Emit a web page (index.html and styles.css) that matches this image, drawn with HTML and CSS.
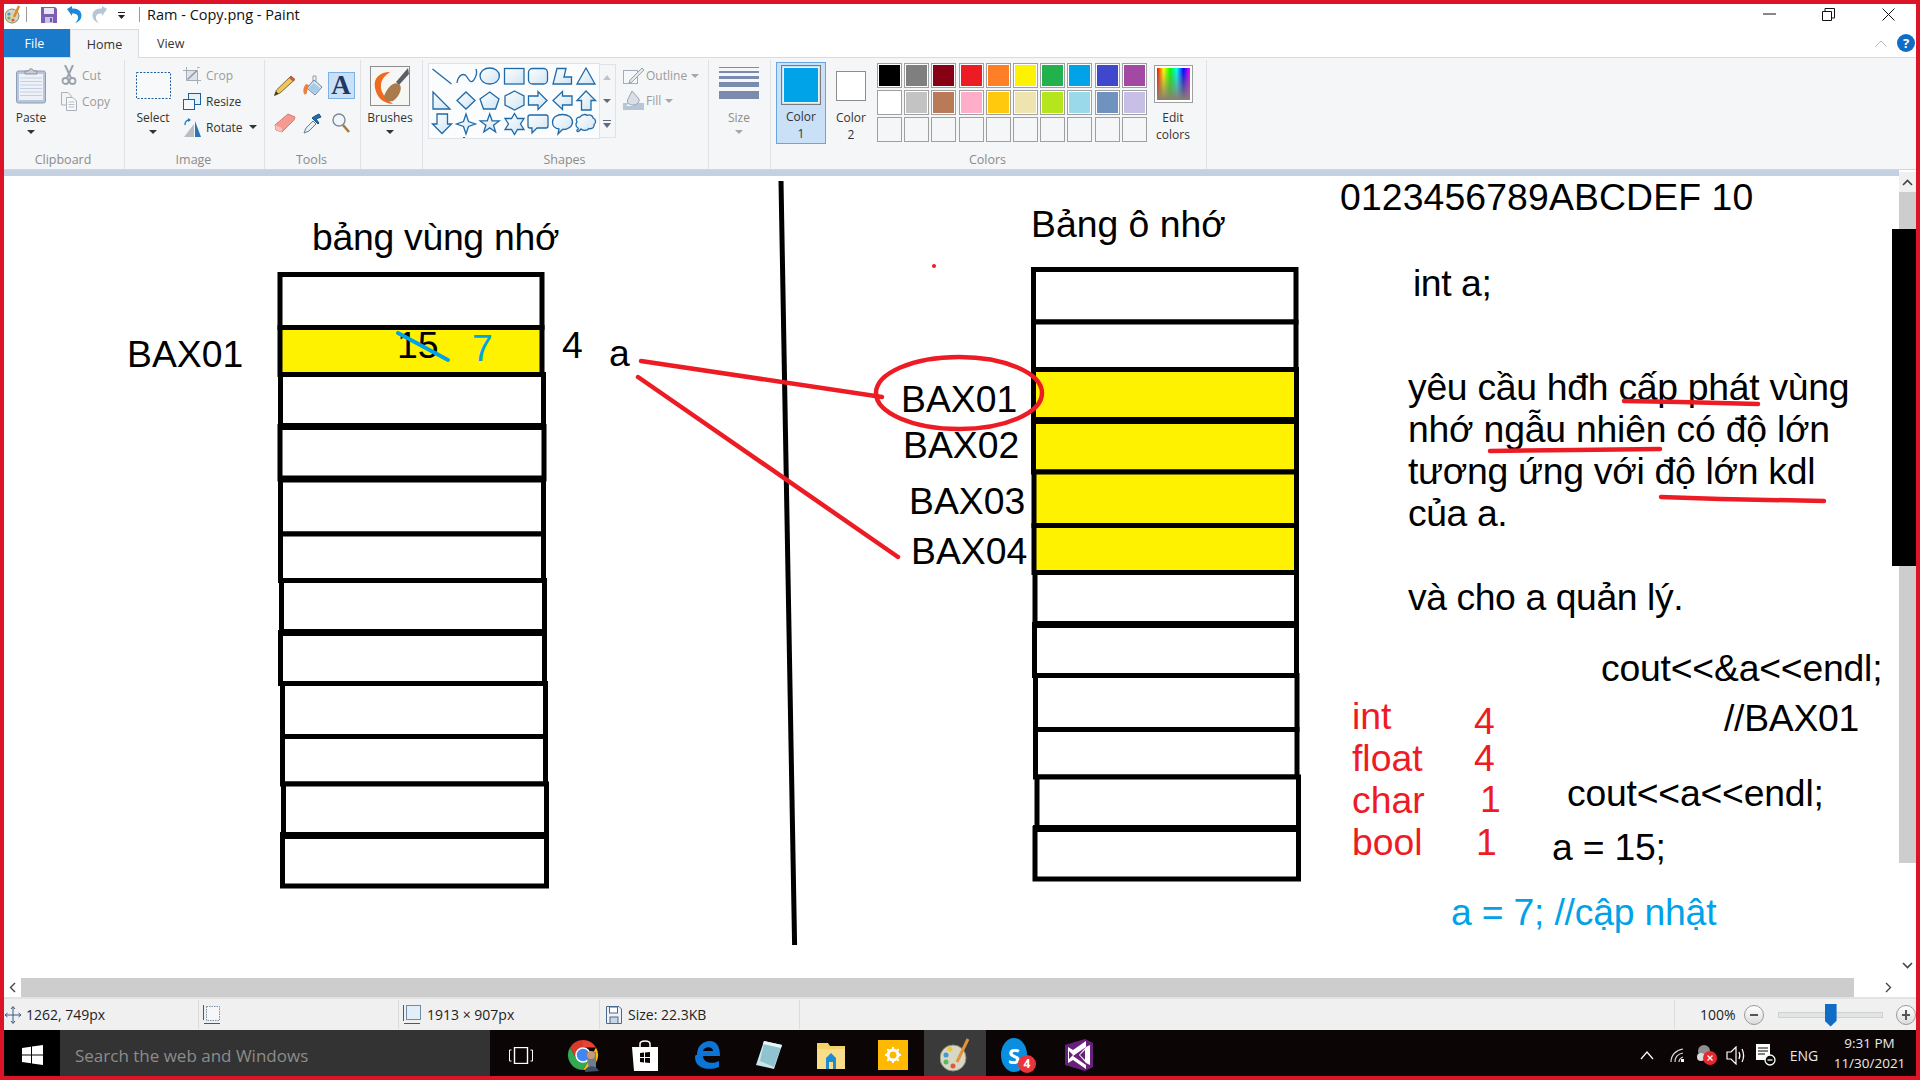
FILE: index.html
```html
<!DOCTYPE html>
<html lang="vi">
<head>
<meta charset="utf-8">
<title>Ram - Copy.png - Paint</title>
<link rel="stylesheet" href="styles.css">
</head>
<body>
<div class="frame">

  <header class="titlebar">
    <svg class="qat-paint" width="16" height="20" viewBox="0 0 16 20"><ellipse cx="7" cy="11" rx="7" ry="7" fill="#d9d3b8" stroke="#8a8a70"/><circle cx="4" cy="9" r="1.6" fill="#3f9ad6"/><circle cx="4" cy="13" r="1.6" fill="#5cb85c"/><circle cx="8" cy="15" r="1.6" fill="#e05a3a"/><path d="M14 1 9 12" stroke="#d98a2b" stroke-width="2.4"/></svg>
    <i class="qat-sep"></i>
    <svg class="qat-save" width="16" height="16" viewBox="0 0 16 16"><path d="M0 0H14L16 2V16H0Z" fill="#7a5fb5"/><rect x="3" y="1" width="10" height="6" fill="#e9e6f4"/><rect x="4" y="10" width="8" height="6" fill="#c9c4de"/><rect x="9" y="11" width="2" height="4" fill="#6a5aa0"/></svg>
    <svg class="qat-undo" width="16" height="17" viewBox="0 0 16 17"><path d="M1 3 6 0V2.5C12 2 15.5 5 15.5 9.5 15.5 13 13 16 9 17 11.5 15 12.5 12.5 12 10.5 11.5 8 9 7 6 7.5V10Z" fill="#1c8ad8"/></svg>
    <svg class="qat-redo" width="16" height="17" viewBox="0 0 16 17"><path d="M15 3 10 0V2.5C4 2 .5 5 .5 9.5.5 13 3 16 7 17 4.5 15 3.5 12.5 4 10.5 4.5 8 7 7 10 7.5V10Z" fill="#b4c6d8"/></svg>
    <svg class="qat-drop" width="8" height="8" viewBox="0 0 8 8"><rect y="0" width="7" height="1" fill="#222"/><path d="M0 3H7L3.500 7Z" fill="#222"/></svg>
    <i class="qat-sep second"></i>
    <span class="title-text">Ram - Copy.png - Paint</span>
    <div class="winctl">
      <svg width="13" height="13" viewBox="0 0 13 13" class="w-min"><path d="M0 6H13" stroke="#111" stroke-width="1"/></svg>
      <svg width="13" height="13" viewBox="0 0 13 13" class="w-max"><path d="M.5 3.500H9.500V12.500H.5ZM3 3.500V.5H12.500V10H9.500" fill="none" stroke="#111"/></svg>
      <svg width="13" height="13" viewBox="0 0 13 13" class="w-close"><path d="M.5.5 12.500 12.500M12.500.5.5 12.500" stroke="#111"/></svg>
    </div>
  </header>

  <nav class="tabs">
    <span class="tab file">File</span>
    <span class="tab home">Home</span>
    <span class="tab view">View</span>
    <svg class="collapse" width="12" height="7" viewBox="0 0 12 7"><path d="M.5 6.500 6 1l5.500 5.500" fill="none" stroke="#b5b5b5"/></svg>
    <span class="help">?</span>
  </nav>

  <section class="ribbon">
    <div class="group g-clip">
      <div class="group-body">
        <div class="big w-paste">
          <div class="big-icon">
            <svg width="30" height="36" viewBox="0 0 30 36"><rect x=".5" y="3" width="29" height="32" rx="2" fill="#b9c6da" stroke="#8d9db8"/><rect x="3" y="6" width="24" height="26" fill="#eef2f8"/><path d="M4 10H26M4 13.500H26M4 17H26M4 20.500H26M4 24H26M4 27.500H26" stroke="#c3d0e4"/><path d="M9 6V3H12.500C13 0 17 0 17.500 3H21V6Z" fill="#c9ccd2" stroke="#8c8f98"/></svg>
          </div>
          <span class="big-label">Paste</span>
          <i class="caret"></i>
        </div>
        <div class="smalls">
          <div class="small off"><svg width="16" height="20" viewBox="0 0 16 20"><path d="M4 0 10 13M12 0 6 13" stroke="#9aa3ad" stroke-width="2" fill="none"/><circle cx="4.500" cy="16" r="3" fill="none" stroke="#9aa3ad" stroke-width="1.800"/><circle cx="11.500" cy="16" r="3" fill="none" stroke="#9aa3ad" stroke-width="1.800"/></svg><span>Cut</span></div>
          <div class="small off"><svg width="16" height="19" viewBox="0 0 16 19"><path d="M.5.5H7L10 3.500V13H.5Z" fill="#f2f4f6" stroke="#a9b0b8"/><path d="M5.500 5.500H12L15.500 9V18.500H5.500Z" fill="#f8f9fa" stroke="#a9b0b8"/><path d="M7.500 10H13.500M7.500 12.500H13.500M7.500 15H13.500" stroke="#b9bfc6"/></svg><span>Copy</span></div>
        </div>
      </div>
      <div class="group-label">Clipboard</div>
    </div>

    <div class="group g-image">
      <div class="group-body">
        <div class="big w-select">
          <div class="big-icon"><svg width="35" height="27" viewBox="0 0 35 27"><rect x=".5" y=".5" width="34" height="26" fill="#f8f9fa" stroke="#1d5f9e" stroke-dasharray="2 1.500"/></svg></div>
          <span class="big-label">Select</span>
          <i class="caret"></i>
        </div>
        <div class="smalls">
          <div class="small off"><svg width="18" height="17" viewBox="0 0 18 17"><path d="M3.500 0V13.500H18M0 3.500H14.500V17" fill="none" stroke="#a3acb7"/><rect x="4" y="4" width="10" height="9" fill="#dfe3e8"/><path d="M4.500 12.500 14 3.500" stroke="#8d97a3" stroke-width="1.500"/><path d="M14 1 17 0" stroke="#a3acb7"/></svg><span>Crop</span></div>
          <div class="small"><svg width="18" height="17" viewBox="0 0 18 17"><rect x="5.500" y=".5" width="12" height="11" fill="#e6f0f9" stroke="#1d5f9e"/><rect x=".5" y="6.500" width="11" height="10" fill="#f6f8fa" stroke="#1d5f9e"/></svg><span>Resize</span></div>
          <div class="small"><svg width="18" height="19" viewBox="0 0 18 19"><path d="M2 7C2 3 4 2 7 2" fill="none" stroke="#1d7cc9" stroke-width="1.400"/><path d="M5 0 8 2 5 4Z" fill="#1d7cc9"/><path d="M11 6V19H1Z" fill="#b9bcc0"/><path d="M12 3 18 19H12Z" fill="#2a74b8"/></svg><span>Rotate</span><i class="caret inline"></i></div>
        </div>
      </div>
      <div class="group-label">Image</div>
    </div>

    <div class="group g-tools">
      <div class="group-body">
        <div class="tool-grid">
          <div class="tool"><svg width="22" height="21" viewBox="0 0 22 21"><path d="M17 1 21 4.500 6 18 .5 20.500 2.500 15Z" fill="#f0c65a" stroke="#7d6a34"/><path d="M17 1 21 4.500 19 6.500 15 3Z" fill="#c75a4a"/><path d="M.5 20.500 2 16.500 4.500 18.500Z" fill="#333"/></svg></div>
          <div class="tool"><svg width="20" height="21" viewBox="0 0 20 21"><path d="M11 5 19 12 12 20 4 13Z" fill="#dbe9f5" stroke="#5d87ad"/><path d="M5 13 11 8 17 13 12 19Z" fill="#a9cbe6"/><path d="M10 7V1H13V7" fill="none" stroke="#9a9a9a"/><path d="M3 9C0 12 0 16 1 19 3 20 4 19 4 16 5 14 5 12 6 10Z" fill="#ef7f3a"/></svg></div>
          <div class="tool tool-on"><span class="letter-a">A</span></div>
          <div class="tool"><svg width="22" height="20" viewBox="0 0 22 20"><path d="M14 1 21 4 20 7 8 19 2 17 1 12Z" fill="#f49a90" stroke="#d77c72"/><path d="M2 17 1 12 8 15 8 19Z" fill="#f7c1ba"/></svg></div>
          <div class="tool"><svg width="20" height="21" viewBox="0 0 20 21"><path d="M1 20 3 15 10 8 13 11 6 18Z" fill="#e9eef3" stroke="#6c7d8c"/><path d="M10 6 15 11 16 10 13 6 18 4 16 1 12 3 9 5Z" fill="#1f6fb2" stroke="#174f80"/></svg></div>
          <div class="tool"><svg width="18" height="20" viewBox="0 0 18 20"><circle cx="7" cy="7" r="6" fill="#eef6fc" stroke="#7d8a96" stroke-width="1.400"/><path d="M11 12 17 19" stroke="#a67c3a" stroke-width="2.600"/></svg></div>
        </div>
      </div>
      <div class="group-label">Tools</div>
    </div>

    <div class="group g-brush">
      <div class="group-body">
        <div class="big w-brush">
          <div class="big-icon"><svg width="40" height="40" viewBox="0 0 40 40"><rect x=".5" y=".5" width="39" height="39" fill="#f6f6f4" stroke="#8d8d8d"/><path d="M38 2 26 16 29 19 39 8Z" fill="#5a5f66"/><path d="M20 6C10 6 3 12 5 22 7 32 13 37 23 38 15 32 10 26 11 18 12 12 16 9 20 6Z" fill="#ee6a1f"/><path d="M14 30C18 20 24 15 29 18 33 21 30 30 23 35 19 36 15 34 14 30Z" fill="#a87a4c"/></svg></div>
          <span class="big-label">Brushes</span>
          <i class="caret"></i>
        </div>
      </div>
      <div class="group-label">&nbsp;</div>
    </div>

    <div class="group g-shapes">
      <div class="group-body">
        <div class="gallery">
          <svg class="gallery-svg" width="170" height="74" viewBox="0 0 170 74">
            <defs><linearGradient id="sf" x1="0" y1="0" x2="1" y2="1"><stop offset="0" stop-color="#fff"/><stop offset="1" stop-color="#cfe4f4"/></linearGradient></defs>
            <g fill="url(#sf)" stroke="#1f6aa8" stroke-width="1.300" stroke-linejoin="miter">
              <path d="M3.500 5 22.500 20" fill="none"/>
              <path d="M28 19C29 11 35 8 38 13S43 20 46 14 47 6 47 5" fill="none"/>
              <ellipse cx="60.700" cy="12" rx="9.700" ry="8"/>
              <rect x="75.500" y="4.500" width="19.500" height="15.500"/>
              <rect x="99.500" y="4.500" width="19" height="15.500" rx="4"/>
              <path d="M128 4.500H137L135 13H142.500V20H124Z"/>
              <path d="M157 4 166 20H148Z"/>
              <path d="M4 28 21 45H4Z"/>
              <path d="M37 28 46 36.500 37 45 28 36.500Z"/>
              <path d="M60.700 28 70 35 66.500 45H54.500L51 35Z"/>
              <path d="M85.500 27 95 32V41L85.500 46 76 41V32Z"/>
              <path d="M99.500 32H109V27.500L118 36.500 109 45.500V41H99.500Z"/>
              <path d="M143 32H133.500V27.500L124 36.500 133.500 45.500V41H143Z"/>
              <path d="M157 27 166.500 36.500H162V46H152.500V36.500H148Z"/>
              <path d="M8 50H18.500V60H22.500L13 69.500 3.500 60H8Z"/>
              <path d="M37 50 39.500 57.500 46.500 60 39.500 62.500 37 70 34.500 62.500 27.500 60 34.500 57.500Z"/>
              <path d="M60.700 50 63.100 56.800 70.200 56.900 64.500 61.200 66.600 68 60.700 63.900 54.800 68 56.900 61.200 51.200 56.900 58.300 56.800Z"/>
              <path d="M85.500 49.500 88.500 54.500H95L91.500 60 95 65.500H88.500L85.500 70.500 82.500 65.500H76L79.500 60 76 54.500H82.500Z"/>
              <path d="M101 51H117A2 2 0 0 1 119 53V62A2 2 0 0 1 117 64H108L103 69V64H101A2 2 0 0 1 99 62V53A2 2 0 0 1 101 51Z"/>
              <path d="M133.500 50.500C139 50.500 143.500 53.500 143.500 58S139 65.500 133.500 65.500L129 70 130 65C126 64.500 123.500 62 123.500 58 123.500 53.500 128 50.500 133.500 50.500Z"/>
              <path d="M151 53C153 50 157 50 158 51.500 161 50 164 52 164 54 167 55 167.500 59 165 60.500 166 63 163 65.500 160 64.500 158 67 154 67 152 65 150 67.500 147.500 69 148 66 150 65 149 64 149 64 146.500 63 146.500 59 148 58 146 55 148.500 53 151 53Z"/>
            </g>
            <rect x="34" y="73" width="2" height="1" fill="#1f6aa8"/>
          </svg>
        </div>
        <div class="spin">
          <span class="spin-cell"><i class="tri up"></i></span>
          <span class="spin-cell"><i class="tri dn"></i></span>
          <span class="spin-cell"><i class="tri more"></i></span>
        </div>
        <div class="smalls s-outline">
          <div class="small off"><svg width="21" height="16" viewBox="0 0 21 16"><rect x=".5" y="2.500" width="14" height="13" fill="#f6f7f8" stroke="#a3acb7"/><path d="M19 0 21 2 9 14 6 15 7 12Z" fill="#e4e7ea" stroke="#9aa3ad"/></svg><span>Outline</span><i class="caret inline gray tight"></i></div>
          <div class="small off"><svg width="21" height="19" viewBox="0 0 21 19"><path d="M0 12H6L3 15 9 15 15 12H21V19H0Z" fill="#b8c5d6"/><path d="M9 0 16 8C17 11 14 14 10 14 6 14 3 11 5 8Z" fill="#d8dfe7" stroke="#9aa3ad"/></svg><span>Fill</span><i class="caret inline gray tight"></i></div>
        </div>
      </div>
      <div class="group-label">Shapes</div>
    </div>

    <div class="group g-size">
      <div class="group-body">
        <div class="big w-size off-text">
          <div class="big-icon"><svg width="40" height="47" viewBox="0 0 40 47"><g fill="#7b8bad"><rect y="5" width="40" height="1"/><rect y="9" width="40" height="2"/><rect y="14" width="40" height="3"/><rect y="20" width="40" height="5"/><rect y="29" width="40" height="8"/></g></svg></div>
          <span class="big-label">Size</span>
          <i class="caret gray"></i>
        </div>
      </div>
      <div class="group-label">&nbsp;</div>
    </div>

    <div class="group g-colors">
      <div class="group-body">
        <div class="color1">
          <span class="sw-big"></span>
          <span class="big-label">Color</span>
          <span class="big-label">1</span>
        </div>
        <div class="color2">
          <div class="big-icon"><span class="sw-mid"></span></div>
          <span class="big-label">Color</span>
          <span class="big-label">2</span>
        </div>
        <div class="palette">
          <i class="sw c01"></i><i class="sw c02"></i><i class="sw c03"></i><i class="sw c04"></i><i class="sw c05"></i><i class="sw c06"></i><i class="sw c07"></i><i class="sw c08"></i><i class="sw c09"></i><i class="sw c10"></i>
          <i class="sw c11"></i><i class="sw c12"></i><i class="sw c13"></i><i class="sw c14"></i><i class="sw c15"></i><i class="sw c16"></i><i class="sw c17"></i><i class="sw c18"></i><i class="sw c19"></i><i class="sw c20"></i>
          <i class="sw"></i><i class="sw"></i><i class="sw"></i><i class="sw"></i><i class="sw"></i><i class="sw"></i><i class="sw"></i><i class="sw"></i><i class="sw"></i><i class="sw"></i>
        </div>
        <div class="edit">
          <div class="big-icon"><span class="rainbow"></span></div>
          <span class="big-label">Edit</span>
          <span class="big-label">colors</span>
        </div>
      </div>
      <div class="group-label">Colors</div>
    </div>
  </section>

  <main class="workspace">
    <div class="paper">
      <svg class="drawing" width="1895" height="802" viewBox="4 176 1895 802">
        <g class="cells">
          <rect x="280" y="274.500" width="262" height="53"/>
          <rect class="y" x="280" y="327.500" width="262" height="47"/>
          <rect x="280.500" y="374.500" width="263" height="52"/>
          <rect x="280" y="426.500" width="264" height="52.500"/>
          <rect x="280.500" y="479" width="263" height="55"/>
          <rect x="280.500" y="534" width="263" height="46.500"/>
          <rect x="281.500" y="580.500" width="263" height="52"/>
          <rect x="280.500" y="632.500" width="264" height="51"/>
          <rect x="282.500" y="683.500" width="263" height="53"/>
          <rect x="282.500" y="736.500" width="263" height="47.500"/>
          <rect x="283.500" y="784" width="263" height="51.500"/>
          <rect x="282.500" y="835.500" width="264" height="50.500"/>

          <rect x="1033.500" y="269.500" width="262.500" height="52.500"/>
          <rect x="1033.500" y="322" width="262.500" height="47.500"/>
          <rect class="y" x="1033.500" y="369.500" width="263" height="51"/>
          <rect class="y" x="1033.500" y="420.500" width="263" height="51.500"/>
          <rect class="y" x="1034" y="472" width="262.500" height="53.500"/>
          <rect class="y" x="1034" y="525.500" width="262.500" height="47"/>
          <rect x="1035" y="572.500" width="261.500" height="52"/>
          <rect x="1034.500" y="624.500" width="262" height="51"/>
          <rect x="1035.500" y="675.500" width="261.500" height="54"/>
          <rect x="1035.500" y="729.500" width="261.500" height="47.500"/>
          <rect x="1037" y="777" width="261.500" height="51.500"/>
          <rect x="1035" y="828.500" width="263.500" height="50.500"/>
        </g>
        <path class="bars" d="M278 426.500H546M278 479H546M279 632.500H547M280 835.500H549M1031 420.500H1299M1033 624.500H1299M1033 828.500H1301"/>
        <path class="divider" d="M781 181 794.600 945"/>

        <g class="t">
          <text class="ls3" x="312" y="250">bảng vùng nhớ</text>
          <text x="1031" y="237">Bảng ô nhớ</text>
          <text class="lsp" x="1340" y="210">0123456789ABCDEF 10</text>
          <text x="127" y="367">BAX01</text>
          <text x="397" y="358">15</text>
          <text x="562" y="358">4</text>
          <text x="609" y="366">a</text>
          <text x="901" y="412">BAX01</text>
          <text x="903" y="458">BAX02</text>
          <text x="909" y="514">BAX03</text>
          <text x="911" y="564">BAX04</text>
          <text class="ls4" x="1413" y="296">int a;</text>
          <text class="ls3" x="1408" y="400">yêu cầu hđh cấp phát vùng</text>
          <text class="ls2" x="1408" y="442">nhớ ngẫu nhiên có độ lớn</text>
          <text class="ls3" x="1408" y="484">tương ứng với độ lớn kdl</text>
          <text class="ls4" x="1408" y="526">của a.</text>
          <text class="ls4" x="1408" y="610">và cho a quản lý.</text>
          <text class="ls2" x="1601" y="681">cout&lt;&lt;&amp;a&lt;&lt;endl;</text>
          <text class="ls3" x="1724" y="731">//BAX01</text>
          <text class="ls2" x="1567" y="806">cout&lt;&lt;a&lt;&lt;endl;</text>
          <text class="ls2" x="1552" y="860">a = 15;</text>
        </g>
        <g class="t red">
          <text x="1352" y="729">int</text>
          <text x="1352" y="771">float</text>
          <text x="1352" y="813">char</text>
          <text x="1352" y="855">bool</text>
          <text x="1474" y="734">4</text>
          <text x="1474" y="771">4</text>
          <text x="1480" y="812">1</text>
          <text x="1476" y="855">1</text>
        </g>
        <g class="t blue">
          <text x="472" y="361">7</text>
          <text class="ls2" x="1451" y="925">a = 7; //cập nhật</text>
        </g>
        <path class="ink-blue" d="M398 333 448 360"/>
        <g class="ink-red">
          <path d="M641 361 882 397"/>
          <path d="M638 377 898 557"/>
          <ellipse cx="959" cy="393" rx="83" ry="36"/>
          <path d="M1624 401 1680 402 1758 404"/>
          <path d="M1490 451 1575 450 1660 449"/>
          <path d="M1661 497 1720 499 1824 501"/>
        </g>
        <circle class="dot" cx="934" cy="266" r="2"/>
      </svg>
    </div>
    <aside class="vscroll">
      <span class="v-arrow top"><svg width="11" height="7" viewBox="0 0 11 7"><path d="M1 6 5.500 1.500 10 6" fill="none" stroke="#444" stroke-width="1.600"/></svg></span>
      <span class="v-track"></span>
      <span class="v-rest"><svg width="11" height="7" viewBox="0 0 11 7"><path d="M1 1 5.500 5.500 10 1" fill="none" stroke="#444" stroke-width="1.600"/></svg></span>
    </aside>
    <div class="black-edge"></div>
  </main>

  <div class="hscroll">
    <span class="h-arrow"><svg width="7" height="11" viewBox="0 0 7 11"><path d="M6 1 1.500 5.500 6 10" fill="none" stroke="#444" stroke-width="1.400"/></svg></span>
    <span class="h-track"></span>
    <span class="h-rest"><svg width="7" height="11" viewBox="0 0 7 11"><path d="M1 1 5.500 5.500 1 10" fill="none" stroke="#444" stroke-width="1.400"/></svg></span>
  </div>

  <footer class="status">
    <div class="st st1"><svg width="16" height="18" viewBox="0 0 16 18"><path d="M8 1V17M0 9H16M6 3 8 .5 10 3M6 15 8 17.500 10 15M2.500 7 0 9 2.500 11M13.500 7 16 9 13.500 11" fill="none" stroke="#3d5a80"/></svg><span>1262, 749px</span></div>
    <div class="st st2"><svg width="18" height="20" viewBox="0 0 18 20"><rect x="3.500" y="1.500" width="13" height="14" fill="#f5f7f9" stroke="#7d8ea6" stroke-dasharray="1.500 1"/><path d="M.5 0V15M1 18.500H17" stroke="#3d5a80"/></svg></div>
    <div class="st st3"><svg width="18" height="20" viewBox="0 0 18 20"><rect x="3.500" y=".5" width="14" height="14" fill="#e3eff8" stroke="#6f8ba8"/><path d="M.5 0V16M1 18.500H17" stroke="#3d5a80"/></svg><span>1913 × 907px</span></div>
    <div class="st st4"><svg width="16" height="18" viewBox="0 0 16 18"><path d="M.5.5H13L15.500 3V17.500H.5Z" fill="#eef2f6" stroke="#4a6a8f"/><rect x="3.500" y="1" width="8" height="6" fill="#fff" stroke="#4a6a8f"/><rect x="4" y="11" width="8" height="6.500" fill="#c9d6e4" stroke="#4a6a8f"/></svg><span>Size: 22.3KB</span></div>
    <div class="st st5"></div>
    <div class="st-zoom">
      <span>100%</span>
      <i class="zoom-btn minus"></i>
      <span class="slider"><i class="slider-thumb"></i></span>
      <i class="zoom-btn plus"></i>
    </div>
  </footer>

  <div class="taskbar">
    <div class="start"><svg width="21" height="20" viewBox="0 0 21 20"><path d="M0 3 9 1.700V9.500H0ZM10 1.500 21 0V9.500H10ZM0 10.500H9V18.300L0 17ZM10 10.500H21V20L10 18.500Z" fill="#fff"/></svg></div>
    <div class="search">Search the web and Windows</div>
    <div class="slot"><svg width="24" height="17" viewBox="0 0 24 17"><rect x="5.500" y=".5" width="13" height="16" fill="none" stroke="#fff" stroke-width="1.400"/><path d="M2.500 3H.5V14H2.500M21.500 3H23.500V14H21.500" fill="none" stroke="#fff"/></svg></div>
    <div class="slot"><svg width="32" height="33" viewBox="0 0 32 33"><path d="M16 1A15 15 0 0 1 29 8.500H16Z" fill="#ea4335"/><path d="M3 8.500A15 15 0 0 1 16 1V8.500H16L9.500 20Z" fill="#d93a2b"/><path d="M29 8.500A15 15 0 0 1 16 31L22.500 20Z" fill="#fbbc05"/><path d="M3 8.500A15 15 0 0 0 16 31L22.500 20H9.500Z" fill="#34a853"/><circle cx="16" cy="16" r="7" fill="#4285f4" stroke="#fff" stroke-width="1.500"/><path d="M19 13H29V31H22Z" fill="#6d7f8f"/><circle cx="24" cy="16" r="4" fill="#c99a7a"/><path d="M18 33C18 26 29 25 32 32Z" fill="#3e5166"/></svg></div>
    <div class="slot"><svg width="26" height="31" viewBox="0 0 26 31"><path d="M8 8V4C8 0 18 0 18 4V8" fill="none" stroke="#fff" stroke-width="1.500"/><path d="M0 7H26V31H2Z" fill="#fff"/><path d="M8 13 12 12.500V17H8ZM13 12.500 18 12V17H13ZM8 18H12V22.500L8 22ZM13 18H18V23L13 22.500Z" fill="#0a0505"/></svg></div>
    <div class="slot"><svg width="25" height="28" viewBox="0 0 25 28"><path d="M2 14C2 5 8 0 15 0 21 0 25 5 25 15H8C8 21 16 24 24 20V26C14 30 0 28 0 16 0 14 1 14 2 14ZM8 10H18C18 5 9 5 8 10Z" fill="#0c75d6"/></svg></div>
    <div class="slot"><svg width="26" height="28" viewBox="0 0 26 28"><path d="M8 0 26 4 18 28 0 24Z" fill="#c9e4ea"/><path d="M4 20 8 3 25 6 18 26Z" fill="#8fc3d0"/><path d="M8 0 26 4 25 7 7 3Z" fill="#e9f4f6"/></svg></div>
    <div class="slot"><svg width="28" height="28" viewBox="0 0 28 28"><path d="M0 2H11L13 5H28V28H0Z" fill="#f4d26a"/><path d="M0 8H28V28H0Z" fill="#f8dd8a"/><path d="M9 17 14 12 19 17V28H9Z" fill="#1e8bd2"/><rect x="12" y="21" width="4" height="7" fill="#f8dd8a"/></svg></div>
    <div class="slot"><span class="settings"><svg width="16" height="16" viewBox="0 0 16 16"><circle cx="8" cy="8" r="5" fill="none" stroke="#fff" stroke-width="3"/><path d="M8 0V3M8 13V16M0 8H3M13 8H16M2.300 2.300 4.400 4.400M11.600 11.600 13.700 13.700M2.300 13.700 4.400 11.600M11.600 4.400 13.700 2.300" stroke="#fff" stroke-width="2"/></svg></span></div>
    <div class="slot active"><svg width="30" height="34" viewBox="0 0 30 34"><ellipse cx="13" cy="20" rx="13" ry="13" fill="#d8d6c4" stroke="#8f8d78"/><circle cx="6" cy="17" r="2.500" fill="#3f9ad6"/><circle cx="6" cy="24" r="2.500" fill="#5cb85c"/><circle cx="13" cy="28" r="2.500" fill="#e05a3a"/><circle cx="10" cy="11" r="2.500" fill="#e8c93a"/><path d="M28 1 17 24" stroke="#e2933a" stroke-width="3"/></svg></div>
    <div class="slot skype-slot"><span class="skype">S</span><span class="badge">4</span></div>
    <div class="slot"><svg width="28" height="32" viewBox="0 0 28 32"><path d="M0 6 20 0 28 4V28L20 32 0 26Z" fill="#68217a"/><path d="M3 8 8 11 21 2V8L8 17 21 26V30L8 21 3 24Z" fill="#fff"/><path d="M21 8 25 6V26L21 24 14 16Z" fill="#fff"/><path d="M20 11V21L15 16Z" fill="#68217a"/><path d="M4 12 8 16 4 20Z" fill="#68217a"/></svg></div>
    <div class="tray">
      <span class="tr"><svg width="14" height="9" viewBox="0 0 14 9"><path d="M1 8 7 1 13 8" fill="none" stroke="#fff" stroke-width="1.200"/></svg></span>
      <span class="tr"><svg width="16" height="16" viewBox="0 0 16 16"><path d="M2 15C2 8 7 3 14 2M6 15C6 10 9 7 14 6M10 15C10 13 11 11 14 10" fill="none" stroke="#d9d9d9" stroke-width="1.200"/><rect x="12" y="12" width="3" height="3" fill="#fff"/></svg></span>
      <span class="tr"><svg width="20" height="22" viewBox="0 0 20 22"><circle cx="7" cy="7" r="6" fill="#8f8f8f"/><circle cx="4" cy="13" r="4" fill="#dcdcdc"/><circle cx="13" cy="14" r="7" fill="#e8262d"/><path d="M10.500 11.500 15.500 16.500M15.500 11.500 10.500 16.500" stroke="#fff" stroke-width="1.300"/></svg></span>
      <span class="tr"><svg width="20" height="19" viewBox="0 0 20 19"><path d="M1 6H5L10 1V18L5 13H1Z" fill="none" stroke="#fff" stroke-width="1.200"/><path d="M13 6C14 8 14 11 13 13M16 3C18 7 18 12 16 16" fill="none" stroke="#fff" stroke-width="1.200"/></svg></span>
      <span class="tr"><svg width="20" height="22" viewBox="0 0 20 22"><path d="M0 0H14V16H0Z" fill="#fff"/><path d="M2 4H12M2 7H12M2 10H9" stroke="#0a0505" stroke-width="1.200"/><circle cx="14" cy="16" r="5" fill="#0a0505" stroke="#fff" stroke-width="1.300"/><path d="M11.500 16H16.500" stroke="#fff" stroke-width="1.300"/></svg></span>
      <span class="tr eng">ENG</span>
      <span class="clock"><span>9:31 PM</span><span>11/30/2021</span></span>
    </div>
  </div>
</div>
</body>
</html>
```
FILE: styles.css
```css
* { box-sizing: border-box; }
html, body { margin: 0; padding: 0; }
body { width: 1920px; height: 1080px; overflow: hidden; background: #fff; font-family: "Open Sans", "Noto Sans", sans-serif; color: #222; }
i { display: block; font-style: normal; }
svg { display: block; flex: none; }

.frame { width: 1920px; height: 1080px; border: 4px solid #dc1426; display: flex; flex-direction: column; overflow: hidden; }

/* title bar */
.titlebar { height: 25px; display: flex; align-items: center; background: #fff; flex: none; padding-bottom: 4px; }
.qat-paint { margin-left: 1px; }
.qat-sep { width: 1px; height: 15px; background: #9a9a9a; margin-left: 5px; }
.qat-sep.second { margin-left: 13px; }
.qat-save { margin-left: 14px; }
.qat-undo { margin-left: 9px; }
.qat-redo { margin-left: 10px; }
.qat-drop { margin-left: 10px; margin-top: 3px; }
.title-text { margin-left: 7px; font-size: 14.500px; color: #111; }
.winctl { margin-left: auto; display: flex; align-items: center; }
.w-min { margin-right: 46px; }
.w-max { margin-right: 47px; }
.w-close { margin-right: 21px; }

/* tabs */
.tabs { height: 28px; display: flex; align-items: stretch; background: #fff; flex: none; font-size: 12.500px; }
.tab { display: flex; align-items: center; justify-content: center; }
.tab.file { width: 66px; background: #1979ca; color: #fff; padding-right: 5px; }
.tab.home { width: 69px; border: 1px solid #dadbdc; border-bottom: 0; background: #f5f6f7; color: #333; height: 29px; position: relative; z-index: 1; }
.tab.view { margin-left: 18px; color: #333; }
.collapse { margin-left: auto; align-self: center; margin-right: 1px; }
.help { align-self: center; width: 18px; height: 18px; border-radius: 50%; background: #0f6dc6; color: #fff; font-weight: 700; font-size: 13px; line-height: 18px; text-align: center; margin-left: 9px; margin-right: 1px; }

/* ribbon */
.ribbon { height: 113px; flex: none; display: flex; background: #f5f6f7; border-top: 1px solid #dadbdc; border-bottom: 1px solid #d3d6db; font-size: 12px; }
.group { display: flex; flex-direction: column; height: 109px; margin-top: 2px; border-right: 1px solid #e0e2e5; flex: none; }
.group-body { flex: 1; display: flex; padding-top: 2px; }
.group-label { height: 20px; line-height: 22px; text-align: center; color: #8b8b8b; font-size: 12.500px; padding-right: 2px; }
.g-clip { width: 121px; }
.g-image { width: 140px; }
.g-tools { width: 96px; }
.g-brush { width: 62px; }
.g-shapes { width: 286px; }
.g-size { width: 62px; }
.g-colors { width: 436px; }

.big { display: flex; flex-direction: column; align-items: center; flex: none; }
.big-icon { height: 47px; display: flex; align-items: center; justify-content: center; }
.big-label { display: block; height: 17px; line-height: 17px; font-size: 12px; color: #333; text-align: center; }
.caret { width: 0; height: 0; border-left: 4px solid transparent; border-right: 4px solid transparent; border-top: 4px solid #333; margin-top: 4px; }
.caret.gray { border-top-color: #a6a6a6; }
.caret.inline { margin: 0 0 0 6px; }
.caret.inline.tight { margin-left: 4px; }
.off-text .big-label { color: #8d8d8d; }

.w-paste { width: 54px; }
.w-select { width: 56px; }
.w-brush { width: 58px; }
.w-size { width: 60px; }

.smalls { display: flex; flex-direction: column; }
.small { height: 26px; display: flex; align-items: center; color: #333; font-size: 12px; }
.small svg { margin-right: 5px; }
.small.off { color: #9b9b9b; }
.g-clip .small svg { margin-left: 3px; }
.g-image .smalls { margin-left: 2px; }

.tool-grid { display: grid; grid-template-columns: repeat(3, 28px); grid-auto-rows: 38px; padding: 4px 0 0 6px; }
.tool { display: flex; align-items: center; justify-content: center; }
.tool-on { width: 27px; height: 27px; justify-self: center; align-self: center; background: #c9e0f7; border: 1px solid #7db0e3; }
.letter-a { font: 700 27px/25px "Liberation Serif", serif; color: #1f3864; }

.g-shapes .group-body { padding-left: 6px; padding-top: 4px; align-items: flex-start; }
.gallery { width: 170px; height: 74px; background: #fbfcfd; outline: 1px solid #dfe3e8; flex: none; }
.spin { width: 17px; height: 74px; display: flex; flex-direction: column; border: 1px solid #dfe2e6; border-left: 0; flex: none; }
.spin-cell { flex: 1; display: flex; align-items: center; justify-content: center; }
.tri { width: 0; height: 0; border-left: 4px solid transparent; border-right: 4px solid transparent; }
.tri.up { border-bottom: 5px solid #bfc4ca; }
.tri.dn { border-top: 4px solid #5e6b7a; }
.tri.more { border-top: 5px solid #5e6b7a; position: relative; }
.tri.more::before { content: ""; position: absolute; left: -4px; top: -8px; width: 8px; height: 1.500px; background: #5e6b7a; }
.s-outline { margin-left: 7px; margin-top: -1px; }
.s-outline .small { height: 25px; }
.s-outline .small svg { margin-right: 2px; }

/* colours */
.g-colors .group-body { padding-left: 5px; }
.color1 { width: 50px; height: 82px; background: #c9e0f7; border: 1px solid #6aa5e0; display: flex; flex-direction: column; align-items: center; padding-top: 2px; flex: none; }
.sw-big { width: 40px; height: 40px; background: #00a2e8; border: 2px solid #c9e0f7; outline: 1px solid #7b7b7b; outline-offset: -1px; box-shadow: inset 0 0 0 1px #e9f2fb; margin-bottom: 3px; flex: none; }
.color2 { width: 50px; display: flex; flex-direction: column; align-items: center; flex: none; }
.sw-mid { width: 30px; height: 30px; display: block; background: #fff; border: 1px solid #8d8d8d; }
.palette { display: grid; grid-template-columns: repeat(10, 25px); grid-auto-rows: 25px; column-gap: 2.200px; row-gap: 2px; margin-left: 1px; padding-top: 1px; flex: none; width: 271px; align-content: start; }
.sw { width: 25px; height: 25px; border: 1px solid #a0a0a0; box-shadow: inset 0 0 0 1px #fff; }
.sw:nth-child(n+21) { box-shadow: none; background: #f5f6f7; }
.c01 { background: #000; } .c02 { background: #7f7f7f; } .c03 { background: #880015; } .c04 { background: #ed1c24; } .c05 { background: #ff7f27; }
.c06 { background: #fff200; } .c07 { background: #22b14c; } .c08 { background: #00a2e8; } .c09 { background: #3f48cc; } .c10 { background: #a349a4; }
.c11 { background: #fff; } .c12 { background: #c3c3c3; } .c13 { background: #b97a57; } .c14 { background: #ffaec9; } .c15 { background: #ffc90e; }
.c16 { background: #efe4b0; } .c17 { background: #b5e61d; } .c18 { background: #99d9ea; } .c19 { background: #7092be; } .c20 { background: #c8bfe7; }
.edit { width: 50px; display: flex; flex-direction: column; align-items: center; flex: none; }
.rainbow { display: block; width: 37px; height: 36px; border: 2px solid #fff; outline: 1px solid #a0a0a0; background: linear-gradient(to bottom, rgba(128,128,128,0) 0%, #8a7f70 100%), linear-gradient(to right, #f00, #ff0, #0f0, #0ff, #00f, #f0f); margin-top: -3px; }

/* workspace */
.workspace { height: 808px; flex: none; display: flex; position: relative; background: #fff; }
.paper { flex: 1; min-width: 0; display: flex; flex-direction: column; border-top: 6px solid #c5d0e0; }
.cells rect { fill: #fff; stroke: #000; stroke-width: 5; }
.cells rect.y { fill: #fff200; }
.bars { stroke: #000; stroke-width: 7; fill: none; }
.divider { stroke: #000; stroke-width: 5; fill: none; }
.t text { font: 37.330px "Liberation Sans", Arial, sans-serif; fill: #000; }
.t.red text { fill: #ed1c24; }
.t.blue text { fill: #00a2e8; }
.t .ls2 { letter-spacing: -.2px; }
.t .ls3 { letter-spacing: -.28px; }
.t .ls4 { letter-spacing: -.42px; }
.t .lsp { letter-spacing: .13px; }
.ink-blue { stroke: #00a2e8; stroke-width: 4; stroke-linecap: round; fill: none; }
.ink-red path, .ink-red ellipse { stroke: #ed1c24; stroke-width: 4.500; stroke-linecap: round; fill: none; }
.dot { fill: #ed1c24; }
.vscroll { width: 17px; flex: none; display: flex; flex-direction: column; background: #fff; }
.v-arrow { height: 20px; margin-top: 2px; background: #f0f0f0; display: flex; align-items: center; justify-content: center; flex: none; }
.v-track { height: 671px; background: #cdcdcd; flex: none; }
.v-rest { flex: 1; background: #fff; display: flex; align-items: flex-end; justify-content: center; padding-bottom: 9px; }
.black-edge { position: absolute; right: 0; top: 59px; width: 24px; height: 337px; background: #000; }

.hscroll { height: 21px; flex: none; display: flex; background: #fff; border-bottom: 2px solid #e3e3e3; }
.h-arrow { width: 17px; display: flex; align-items: center; justify-content: center; flex: none; }
.h-track { width: 1833px; background: #cdcdcd; flex: none; }
.h-rest { flex: 1; display: flex; align-items: center; justify-content: flex-end; padding-right: 24px; }

/* status */
.status { height: 31px; flex: none; display: flex; background: #f0f0f0; font-size: 14px; color: #222; }
.st { display: flex; align-items: center; gap: 5px; border-right: 1px solid #dcdcdc; flex: none; margin: 1px 0; }
.st1 { width: 195px; padding-left: 1px; }
.st2 { width: 200px; padding-left: 4px; }
.st3 { width: 201px; padding-left: 4px; gap: 6px; }
.st4 { width: 200px; padding-left: 6px; gap: 6px; }
.st5 { width: 875px; }
.st-zoom { flex: 1; display: flex; align-items: center; padding-left: 25px; font-size: 14px; position: relative; }
.zoom-btn { width: 20px; height: 20px; border-radius: 50%; border: 1px solid #9a9a9a; background: linear-gradient(#fff, #dcdcdc); margin-left: 8px; flex: none; position: relative; }
.zoom-btn::before { content: ""; position: absolute; left: 5px; right: 5px; top: 8px; height: 2px; background: #555; }
.zoom-btn.plus::after { content: ""; position: absolute; top: 4px; bottom: 4px; left: 8px; width: 2px; background: #555; }
.slider { width: 105px; height: 6px; background: #e3e5e5; border: 1px solid #cfd2d2; margin-left: 14px; position: relative; flex: none; display: block; }
.zoom-btn.plus { margin-left: 13px; }
.slider-thumb { position: absolute; left: 46px; top: -9px; width: 12px; height: 23px; background: #0f6dc6; clip-path: polygon(0 0, 100% 0, 100% 75%, 50% 100%, 0 75%); }

/* taskbar */
.taskbar { height: 46px; flex: none; display: flex; align-items: stretch; background: #0b0605; color: #fff; }
.start { width: 56px; background: #000; display: flex; align-items: center; justify-content: center; flex: none; padding-top: 4px; }
.search { width: 430px; background: #333; color: #8c8c8c; font-size: 17px; display: flex; align-items: center; padding: 4px 0 0 15px; flex: none; }
.slot { width: 62px; display: flex; align-items: center; justify-content: center; flex: none; position: relative; padding-top: 4px; }
.slot.active { background: #3a3a3a; }
.settings { width: 30px; height: 30px; background: #ffb900; display: flex; align-items: center; justify-content: center; }
.skype { width: 26px; height: 34px; border-radius: 50%; background: #0a8fe0; color: #fff; font: 700 22px/34px "Open Sans", sans-serif; text-align: center; display: block; margin-left: -6px; }
.badge { position: absolute; left: 32px; top: 25px; width: 18px; height: 18px; border-radius: 50%; background: #e8353a; color: #fff; font: 700 12px/18px "Open Sans", sans-serif; text-align: center; }
.tray { margin-left: auto; display: flex; align-items: center; padding: 2px 4px 0 0; }
.tr { width: 29.800px; display: flex; align-items: center; justify-content: center; flex: none; padding-top: 2px; }
.eng { width: 46px; font-size: 14px; color: #e8e8e8; }
.clock { width: 85px; display: flex; flex-direction: column; align-items: center; font-size: 13.500px; line-height: 20px; color: #eaeaea; margin-top: -2px; }
```
